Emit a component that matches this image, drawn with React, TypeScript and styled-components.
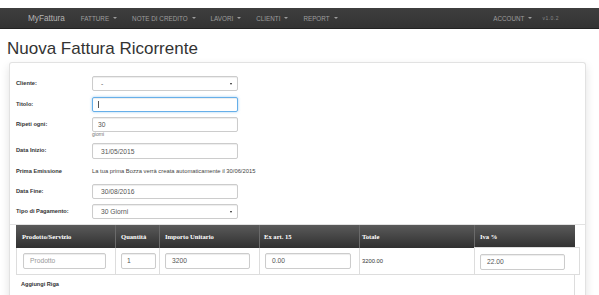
import React from "react";
import styled, {createGlobalStyle, css} from "styled-components";

const GlobalStyle = createGlobalStyle`
  html, body {
    margin: 0;
    padding: 0;
    background: #fff;
  }
  body {
    font-family: "Liberation Sans", Arial, sans-serif;
    color: #333;
    overflow: hidden;
  }
`;

const Page = styled.div`
  padding-top: 8px;
`;

const Navbar = styled.nav`
  height: 20px;
  display: flex;
  align-items: center;
  padding-left: 28px;
  background: linear-gradient(#3e3e3e, #333);
  border-bottom: 1px solid #222;
`;

const Brand = styled.span`
  font-size: 8.2px;
  color: #b4b4b4;
  margin-right: 8.5px;
`;

const NavItem = styled.span`
  display: flex;
  align-items: center;
  padding: 0 7.5px;
  font-size: 6.3px;
  color: #9d9d9d;
  text-transform: uppercase;
`;

const Caret = styled.span`
  display: inline-block;
  width: 0;
  height: 0;
  margin-left: 4px;
  border-top: 2px solid #9d9d9d;
  border-left: 2px solid transparent;
  border-right: 2px solid transparent;
`;

const Spacer = styled.div`
  flex: 1;
`;

const Version = styled.span`
  font-size: 5px;
  letter-spacing: 0.5px;
  color: #8a8a8a;
  margin: 0 40px 0 2.5px;
`;

const Title = styled.h1`
  margin: 10px 0 4px 7px;
  font-size: 17px;
  line-height: 19px;
  font-weight: normal;
  color: #333;
`;

const Panel = styled.section`
  margin: 0 13px 0 9px;
  padding-top: 13px;
  border: 1px solid #e2e2e2;
  border-bottom: none;
  border-radius: 3px 3px 0 0;
  box-shadow: 0 4px 10px rgba(0, 0, 0, 0.12);
`;

const Form = styled.div`
  display: flex;
  flex-direction: column;
  gap: 5.5px;
  padding: 0 6px;
`;

const Row = styled.div<{$h?: number}>`
  display: grid;
  grid-template-columns: 76px 146px;
  align-items: start;
  ${p => p.$h && css`height: ${p.$h}px;`}
`;

const Label = styled.div<{$lh?: number}>`
  font-size: 5.7px;
  font-weight: bold;
  line-height: ${p => p.$lh ?? 15}px;
  color: #333;
`;

const Field = styled.div<{$pad?: number; $focus?: boolean; $w?: number; $h?: number}>`
  position: relative;
  box-sizing: border-box;
  width: ${p => p.$w ?? 146}px;
  height: ${p => p.$h ?? 15}px;
  display: flex;
  align-items: center;
  padding: 0 ${p => p.$pad ?? 5}px;
  border: 1px solid #ccc;
  border-radius: 2px;
  background: #fff;
  font-size: 6.7px;
  color: #555;
  box-shadow: inset 0 1px 1px rgba(0, 0, 0, 0.075);
  ${p => p.$focus && css`
    border-color: #66afe9;
    box-shadow: inset 0 1px 1px rgba(0, 0, 0, 0.075), 0 0 3px rgba(102, 175, 233, 0.6);
  `}
`;

const Placeholder = styled.span`
  color: #999;
`;

const SelectArrow = styled.span`
  position: absolute;
  right: 5px;
  top: 6px;
  width: 0;
  height: 0;
  border-top: 2.5px solid #222;
  border-left: 1.5px solid transparent;
  border-right: 1.5px solid transparent;
`;

const TextCursor = styled.span`
  width: 1px;
  height: 7px;
  background: #555;
`;

const Help = styled.div`
  font-size: 5px;
  line-height: 5.5px;
  height: 5.5px;
  color: #737373;
`;

const Note = styled.div`
  font-size: 5.8px;
  line-height: 13.5px;
  color: #444;
  white-space: nowrap;
`;

const Divider = styled.div`
  height: 1px;
  margin-top: 4.5px;
  background: #e2e2e2;
`;

const Table = styled.div`
  margin-left: 6px;
  width: 559px;
`;

const HeadRow = styled.div`
  display: grid;
  grid-template-columns: 99px 44px 100px 100px 115px 101px;
  height: 23px;
  background: linear-gradient(#5a5a5a, #303030);
`;

const HeadCell = styled.div<{$pad?: number; $first?: boolean}>`
  display: flex;
  align-items: center;
  padding-left: ${p => p.$pad ?? 5}px;
  font-family: "Liberation Serif", "Times New Roman", serif;
  font-weight: bold;
  font-size: 6.6px;
  color: #fff;
  border-left: ${p => (p.$first ? "none" : "1px solid #6a6a6a")};
`;

const BodyRow = styled.div`
  display: grid;
  grid-template-columns: 99px 44px 100px 100px 115px 106px;
  width: 564px;
  height: 27px;
  box-sizing: border-box;
  border-bottom: 1px solid #ddd;
`;

const BodyCell = styled.div<{$pad?: number; $last?: boolean}>`
  box-sizing: border-box;
  padding: 5px 0 0 ${p => p.$pad ?? 5}px;
  border-left: 1px solid #ddd;
  font-size: 5.8px;
  color: #333;
  ${p => p.$last && css`
    border-right: 1px solid #ddd;
    border-top: 1px solid #ddd;
    margin-top: -1px;
    padding-top: 6px;
  `}
`;

const TotalText = styled.div`
  line-height: 16px;
`;

const Footer = styled.div`
  height: 30px;
  padding: 5px 0 0 5px;
  border-right: 1px solid #ddd;
  font-size: 5.6px;
  font-weight: bold;
  line-height: 8px;
  color: #333;
`;

const navItems = ["Fatture", "Note di credito", "Lavori", "Clienti", "Report"];
const columns = [
  {title: "Prodotto/Servizio", pad: 6},
  {title: "Quantità", pad: 5},
  {title: "Importo Unitario", pad: 5},
  {title: "Ex art. 15", pad: 4},
  {title: "Totale", pad: 2},
  {title: "Iva %", pad: 5},
];

export default function App() {
  return (
    <Page>
      <GlobalStyle/>
      <Navbar>
        <Brand>MyFattura</Brand>
        {navItems.map(item => (
          <NavItem key={item}>{item}<Caret/></NavItem>
        ))}
        <Spacer/>
        <NavItem>Account<Caret/></NavItem>
        <Version>v1.0.2</Version>
      </Navbar>

      <Title>Nuova Fattura Ricorrente</Title>

      <Panel>
        <Form>
          <Row>
            <Label>Cliente:</Label>
            <Field $pad={8}>-<SelectArrow/></Field>
          </Row>
          <Row>
            <Label>Titolo:</Label>
            <Field $focus><TextCursor/></Field>
          </Row>
          <Row>
            <Label>Ripeti ogni:</Label>
            <div>
              <Field>30</Field>
              <Help>giorni</Help>
            </div>
          </Row>
          <Row>
            <Label>Data Inizio:</Label>
            <Field $pad={8} $h={16}>31/05/2015</Field>
          </Row>
          <Row $h={13.5}>
            <Label $lh={13.5}>Prima Emissione</Label>
            <Note>La tua prima Bozza verrà creata automaticamente il 30/06/2015</Note>
          </Row>
          <Row>
            <Label>Data Fine:</Label>
            <Field $pad={8}>30/08/2016</Field>
          </Row>
          <Row>
            <Label>Tipo di Pagamento:</Label>
            <Field $pad={8}>30 Giorni<SelectArrow/></Field>
          </Row>
        </Form>

        <Divider/>

        <Table>
          <HeadRow>
            {columns.map((c, i) => (
              <HeadCell key={c.title} $pad={c.pad} $first={i === 0}>{c.title}</HeadCell>
            ))}
          </HeadRow>
          <BodyRow>
            <BodyCell $pad={6}>
              <Field $w={83} $h={16} $pad={6}><Placeholder>Prodotto</Placeholder></Field>
            </BodyCell>
            <BodyCell>
              <Field $w={35} $h={16} $pad={5}>1</Field>
            </BodyCell>
            <BodyCell>
              <Field $w={85} $h={16} $pad={6}>3200</Field>
            </BodyCell>
            <BodyCell>
              <Field $w={86} $h={16} $pad={6}>0.00</Field>
            </BodyCell>
            <BodyCell $pad={2}>
              <TotalText>3200.00</TotalText>
            </BodyCell>
            <BodyCell $last>
              <Field $w={85} $h={16} $pad={6}>22.00</Field>
            </BodyCell>
          </BodyRow>
          <Footer>Aggiungi Riga</Footer>
        </Table>
      </Panel>
    </Page>
  );
}
